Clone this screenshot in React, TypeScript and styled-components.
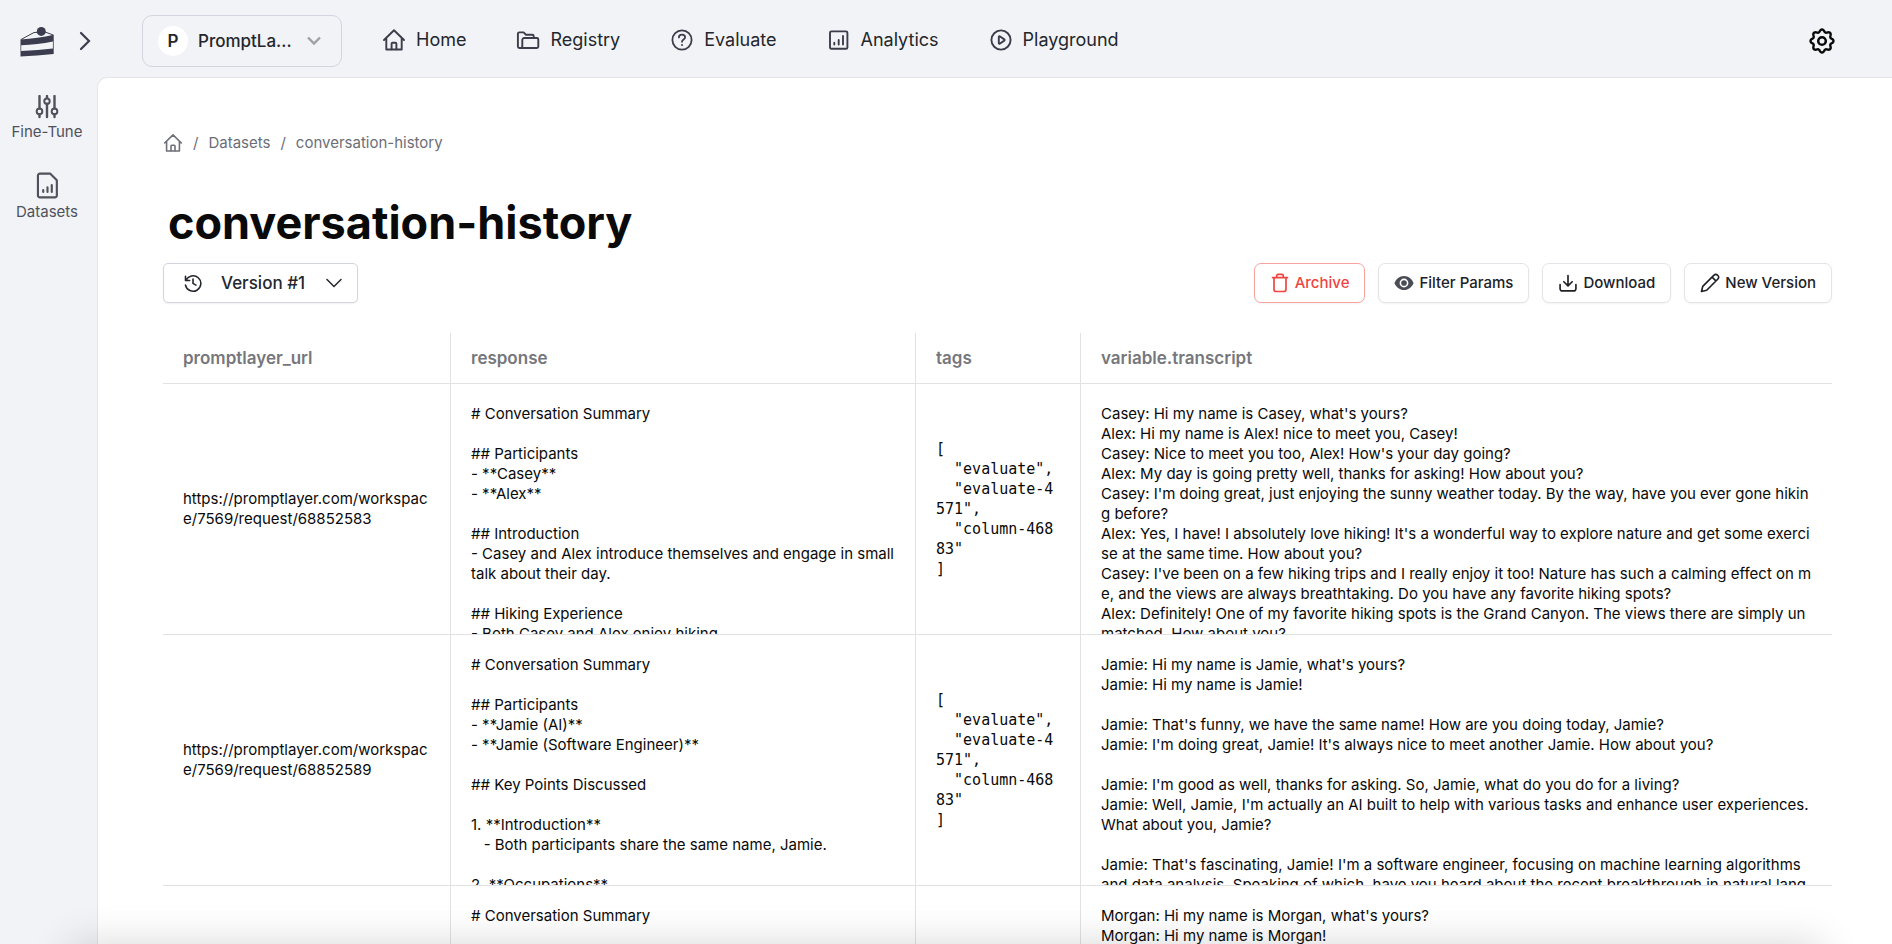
import React from "react";
import styled, { createGlobalStyle } from "styled-components";

const GlobalStyle = createGlobalStyle`
  *, *::before, *::after { box-sizing: border-box; }
  body {
    margin: 0;
    background: #f2f3f6;
    color: #0a0a0a;
    font-family: Inter, "Liberation Sans", sans-serif;
    font-size: 15px;
    line-height: 20px;
  }
  a { color: inherit; text-decoration: none; }
  button, select { font: inherit; color: inherit; cursor: pointer; }
  svg { display: block; flex: none; }
`;

const Shell = styled.div`
  display: flex;
  flex-direction: column;
  height: 100vh;
  overflow: hidden;
`;

const TopBar = styled.header`
  display: flex;
  align-items: center;
  flex: none;
  height: 77px;
  padding: 5px 57px 0 20px;
`;

const Brand = styled.div`
  display: flex;
  align-items: center;
  gap: 23px;
  width: 122px;
  color: #3b3d4f;
`;

const IconButton = styled.button`
  display: flex;
  padding: 0;
  border: 0;
  background: none;
  color: ${(p) => p.color || "inherit"};
`;

const Picker = styled.label<{ $large?: boolean }>`
  display: flex;
  align-items: center;
  gap: ${(p) => (p.$large ? 10 : 18)}px;
  width: ${(p) => (p.$large ? 200 : 195)}px;
  height: ${(p) => (p.$large ? 52 : 40)}px;
  padding: 0 ${(p) => (p.$large ? 20 : 15)}px 0 ${(p) => (p.$large ? 15 : 19)}px;
  border: 1px solid #d3d5de;
  border-radius: ${(p) => (p.$large ? 10 : 5)}px;
  background: ${(p) => (p.$large ? "transparent" : "#fff")};
  box-shadow: ${(p) => (p.$large ? "none" : "0 1px 2px rgba(0, 0, 0, 0.06)")};
  color: #24262d;
`;

const PickerSelect = styled.select`
  flex: 1;
  min-width: 0;
  padding: 0;
  border: 0;
  outline: 0;
  appearance: none;
  background: none;
  font-size: 17px;
  font-weight: 500;
  line-height: 24px;
`;

const Avatar = styled.span`
  display: grid;
  place-items: center;
  flex: none;
  width: 30px;
  height: 30px;
  border-radius: 50%;
  background: #fff;
  font-size: 17px;
  font-weight: 600;
`;

const MainNav = styled.nav`
  display: flex;
  align-items: center;
  gap: 50px;
  margin: 0 auto 3px 40px;
`;

const NavLink = styled.a`
  display: flex;
  align-items: center;
  gap: 10px;
  color: #24262d;
  font-size: 18px;
  line-height: 24px;

  svg { color: #3b3d4a; }
`;

const Body = styled.div`
  display: flex;
  flex: 1;
  min-height: 0;
`;

const SideNav = styled.nav`
  display: flex;
  flex-direction: column;
  gap: 30px;
  flex: none;
  width: 97px;
  padding: 18px 3px 0 0;
`;

const SideLink = styled.a`
  display: flex;
  flex-direction: column;
  align-items: center;
  gap: 3px;
  color: #4f525c;
`;

const Content = styled.main`
  flex: 1;
  min-width: 0;
  overflow: hidden;
  padding: 55px 60px 0 65px;
  border: 1px solid #e4e5e9;
  border-width: 1px 0 0 1px;
  border-top-left-radius: 10px;
  background: #fff;
`;

const Crumbs = styled.nav`
  display: flex;
  align-items: center;
  gap: 10px;
  height: 20px;
  color: #6c6e78;
`;

const Title = styled.h1`
  margin: 38px 0 0;
  padding-left: 5px;
  font-size: 45px;
  font-weight: 700;
  line-height: 64px;
`;

const Toolbar = styled.div`
  display: flex;
  align-items: center;
  justify-content: space-between;
  margin-top: 8px;
`;

const Actions = styled.div`
  display: flex;
  gap: 13px;
`;

const ActionButton = styled.button<{ $danger?: boolean }>`
  display: flex;
  align-items: center;
  gap: 5px;
  height: 40px;
  padding: 0 15px;
  border: 1px solid ${(p) => (p.$danger ? "#f9a3a0" : "#e3e4e8")};
  border-radius: 7px;
  background: #fff;
  box-shadow: 0 1px 2px rgba(0, 0, 0, 0.05);
  color: ${(p) => (p.$danger ? "#ef4440" : "#202228")};
  font-weight: 500;
`;

const DataTable = styled.table`
  width: 100%;
  margin-top: 30px;
  border-collapse: separate;
  border-spacing: 0;
  table-layout: fixed;
`;

const HeadCell = styled.th<{ $width?: number }>`
  width: ${(p) => (p.$width ? `${p.$width}px` : "auto")};
  height: 51px;
  padding: 0 20px;
  border-bottom: 1px solid #e2e2e5;
  color: #76777c;
  font-size: 17px;
  font-weight: 600;
  text-align: left;

  &:not(:last-child) { border-right: 1px solid #e2e2e5; }
`;

const Cell = styled.td`
  padding: 0;
  border-bottom: 1px solid #e2e2e5;
  vertical-align: middle;

  &:not(:last-child) { border-right: 1px solid #e2e2e5; }
`;

const CellText = styled.div<{ $mono?: boolean; $tall?: boolean }>`
  height: ${(p) => (p.$tall ? "250px" : "auto")};
  padding: ${(p) => (p.$tall ? 20 : 0)}px 20px 0;
  overflow: hidden;
  white-space: pre-wrap;
  word-break: break-all;
  font-family: ${(p) => (p.$mono ? '"DejaVu Sans Mono", monospace' : "inherit")};
`;

const BottomShade = styled.div`
  position: fixed;
  right: 80px;
  bottom: -40px;
  left: 80px;
  height: 30px;
  box-shadow: 0 0 40px 10px rgba(0, 0, 0, 0.16);
  pointer-events: none;
`;

type IconProps = { size?: number; stroke?: number; children: React.ReactNode };

const Icon = ({ size = 24, stroke = 2, children }: IconProps) => (
  <svg
    width={size}
    height={size}
    viewBox="0 0 24 24"
    fill="none"
    stroke="currentColor"
    strokeWidth={stroke}
    strokeLinecap="round"
    strokeLinejoin="round"
    aria-hidden="true"
  >
    {children}
  </svg>
);

const HomeIcon = ({ size = 24 }: { size?: number }) => (
  <Icon size={size} stroke={1.9}>
    <path d="M2 12 12 2.3 22 12M4.3 10v11.5h15.4V10" />
    <path d="M9.6 21.3v-5.6a1 1 0 0 1 1-1h2.8a1 1 0 0 1 1 1v5.6" />
  </Icon>
);

const FoldersIcon = () => (
  <Icon stroke={1.9}>
    <path d="M5.6 20H3.3a1.4 1.4 0 0 1-1.4-1.4V5.8a1.4 1.4 0 0 1 1.4-1.4h4.3l2.4 2.3h6.3a1.4 1.4 0 0 1 1.4 1.4v1.7" />
    <path d="M6.3 18.6v-6.7a1.9 1.9 0 0 1 1.9-1.9h12.7a1.4 1.4 0 0 1 1.4 1.4v7.2a1.4 1.4 0 0 1-1.4 1.4H4.9a1.4 1.4 0 0 0 1.4-1.4Z" />
  </Icon>
);

const QuestionIcon = () => (
  <Icon stroke={1.8}>
    <circle cx="12" cy="12" r="9.6" />
    <path d="M8.9 9.4c0-1.7 1.4-2.7 3.1-2.7s3.1 1.1 3.1 2.6c0 2.2-3.1 2.3-3.1 4.5" />
    <path d="M12 17v.1" strokeWidth="2" />
  </Icon>
);

const ChartIcon = () => (
  <Icon stroke={1.9}>
    <rect x="3" y="3.4" width="17.4" height="17.4" rx="1.4" />
    <path d="M7.3 14.8v1.8M11.7 12v4.6M16 8v8.6" />
  </Icon>
);

const PlayIcon = () => (
  <Icon stroke={1.9}>
    <circle cx="12" cy="12" r="9.6" />
    <path d="M9.8 8.8v6.4a.6.6 0 0 0 .9.5l4.6-3.1a.7.7 0 0 0 0-1.2l-4.6-3.1a.6.6 0 0 0-.9.5Z" />
  </Icon>
);

const SlidersIcon = () => (
  <Icon>
    <path d="M4.5 1v12.5M4.5 19.5V22M12 1v1.6M12 8.6V22M19.5 1v12.5M19.5 19.5V22" strokeWidth="2.4" />
    <circle cx="4.5" cy="16.4" r="2.8" />
    <circle cx="12" cy="6.2" r="2.7" />
    <circle cx="19.5" cy="16.4" r="2.8" />
  </Icon>
);

const ReportIcon = () => (
  <Icon size={27} stroke={1.9}>
    <path d="M5.2 1.5h9.3l5.8 5.9v13.4a1.7 1.7 0 0 1-1.7 1.7H5.2a1.7 1.7 0 0 1-1.7-1.7V3.2a1.7 1.7 0 0 1 1.7-1.7Z" />
    <path d="M8.2 16v1.8M12 13.6v4.2M15.8 11.6v6.2" />
  </Icon>
);

const CakeLogo = () => (
  <svg width="36" height="32" viewBox="0 0 36 32" fill="#3b3d4f" aria-hidden="true">
    <path d="M1 14.5 14 7.5 25 7 33.3 10" fill="none" stroke="#3b3d4f" strokeWidth="1" />
    <circle cx="21.3" cy="6.4" r="4.5" />
    <path d="M.5 14.5C12 14 23 12.3 33.7 9.8v19.2C23 30.2 11 31 .5 31.5Z" />
    <path d="M1.2 20.2c11-.3 21.4-1.6 31.7-3.7v6.9c-10 1.2-20.4 2-31.7 2.5Z" fill="#f2f3f6" />
  </svg>
);

/* Outline of a gear with eight rounded teeth. */
const gearOutline =
  Array.from({ length: 96 }, (_, i) => {
    const angle = (i / 96) * Math.PI * 2;
    const wave = Math.cos(angle * 8);
    const radius = 9.5 + 1.1 * Math.sign(wave) * Math.pow(Math.abs(wave), 0.8);
    const x = 12 + radius * Math.sin(angle);
    const y = 12 - radius * Math.cos(angle);
    return `${i ? "L" : "M"}${x.toFixed(2)} ${y.toFixed(2)}`;
  }).join("") + "Z";

const GearIcon = () => (
  <Icon size={26} stroke={2.2}>
    <path d={gearOutline} />
    <circle cx="12" cy="12" r="3.5" strokeWidth="2.3" />
  </Icon>
);

const HistoryIcon = () => (
  <Icon size={20} stroke={1.9}>
    <path d="M3 4v5h5" />
    <path d="M3.6 8.8A9.3 9.3 0 1 1 3 14.5" />
    <path d="M12 7.3v5.2l3.5 2" />
  </Icon>
);

const TrashIcon = () => (
  <Icon size={20} stroke={2}>
    <path d="M3 5.5h18M8 5V3.3a1.7 1.7 0 0 1 1.7-1.7h4.6A1.7 1.7 0 0 1 16 3.3V5M4.8 5.5v14.3a2.4 2.4 0 0 0 2.4 2.4h9.6a2.4 2.4 0 0 0 2.4-2.4V5.5" />
  </Icon>
);

const EyeIcon = () => (
  <svg width="20" height="20" viewBox="0 0 24 24" aria-hidden="true">
    <path d="M12 3.5C6.5 3.5 2.5 7.3.5 12c2 4.7 6 8.5 11.5 8.5s9.5-3.8 11.5-8.5C21.5 7.3 17.5 3.5 12 3.5Z" fill="#4a4d57" />
    <circle cx="12" cy="12" r="5.3" fill="#fff" />
    <circle cx="12" cy="12" r="3.4" fill="#4a4d57" />
  </svg>
);

const DownloadIcon = () => (
  <Icon size={20}>
    <path d="M2.5 14v5a2.5 2.5 0 0 0 2.5 2.5h14a2.5 2.5 0 0 0 2.5-2.5v-5M12 3v12.5M7 10.5l5 5 5-5" />
  </Icon>
);

const PencilIcon = () => (
  <Icon size={20}>
    <path d="M1.8 22.2 3.3 16 16.8 2.5a2.9 2.9 0 0 1 4.2 0l.5.5a2.9 2.9 0 0 1 0 4.2L8 20.7ZM14.5 5l4.500 4.500" />
  </Icon>
);

const navItems = [
  { label: "Home", icon: <HomeIcon /> },
  { label: "Registry", icon: <FoldersIcon /> },
  { label: "Evaluate", icon: <QuestionIcon /> },
  { label: "Analytics", icon: <ChartIcon /> },
  { label: "Playground", icon: <PlayIcon /> },
];

const columns = [
  { name: "promptlayer_url", width: 288 },
  { name: "response", width: 465 },
  { name: "tags", width: 165 },
  { name: "variable.transcript" },
];

const tags = `[
  "evaluate",
  "evaluate-4571",
  "column-46883"
]`;

const rows = [
  {
    url: "https://promptlayer.com/workspace/7569/request/68852583",
    response: `# Conversation Summary

## Participants
- **Casey**
- **Alex**

## Introduction
- Casey and Alex introduce themselves and engage in small talk about their day.

## Hiking Experience
- Both Casey and Alex enjoy hiking.`,
    transcript: `Casey: Hi my name is Casey, what's yours?
Alex: Hi my name is Alex! nice to meet you, Casey!
Casey: Nice to meet you too, Alex! How's your day going?
Alex: My day is going pretty well, thanks for asking! How about you?
Casey: I'm doing great, just enjoying the sunny weather today. By the way, have you ever gone hiking before?
Alex: Yes, I have! I absolutely love hiking! It's a wonderful way to explore nature and get some exercise at the same time. How about you?
Casey: I've been on a few hiking trips and I really enjoy it too! Nature has such a calming effect on me, and the views are always breathtaking. Do you have any favorite hiking spots?
Alex: Definitely! One of my favorite hiking spots is the Grand Canyon. The views there are simply unmatched. How about you?`,
  },
  {
    url: "https://promptlayer.com/workspace/7569/request/68852589",
    response: `# Conversation Summary

## Participants
- **Jamie (AI)**
- **Jamie (Software Engineer)**

## Key Points Discussed

1. **Introduction**
   - Both participants share the same name, Jamie.

2. **Occupations**`,
    transcript: `Jamie: Hi my name is Jamie, what's yours?
Jamie: Hi my name is Jamie!

Jamie: That's funny, we have the same name! How are you doing today, Jamie?
Jamie: I'm doing great, Jamie! It's always nice to meet another Jamie. How about you?

Jamie: I'm good as well, thanks for asking. So, Jamie, what do you do for a living?
Jamie: Well, Jamie, I'm actually an AI built to help with various tasks and enhance user experiences. What about you, Jamie?

Jamie: That's fascinating, Jamie! I'm a software engineer, focusing on machine learning algorithms and data analysis. Speaking of which, have you heard about the recent breakthrough in natural language processing?`,
  },
  {
    url: "https://promptlayer.com/workspace/7569/request/68852591",
    response: "# Conversation Summary",
    transcript: `Morgan: Hi my name is Morgan, what's yours?
Morgan: Hi my name is Morgan!`,
  },
];

export default function App() {
  return (
    <Shell>
      <GlobalStyle />
      <TopBar>
        <Brand>
          <CakeLogo />
          <IconButton type="button" aria-label="Expand sidebar">
            <svg width="12" height="20" viewBox="0 0 12 20" fill="none" stroke="currentColor" strokeWidth="2.2" strokeLinecap="round">
              <path d="M2 2 10 10 2 18" />
            </svg>
          </IconButton>
        </Brand>
        <Picker $large>
          <Avatar>P</Avatar>
          <PickerSelect aria-label="Workspace">
            <option>PromptLa...</option>
          </PickerSelect>
          <svg width="14" height="10" viewBox="0 0 14 10" fill="none" stroke="#a0a0a3" strokeWidth="2.4">
            <path d="M1 1.5 7 7.5 13 1.5" />
          </svg>
        </Picker>
        <MainNav aria-label="Main">
          {navItems.map((item) => (
            <NavLink key={item.label} href="#">
              {item.icon}
              {item.label}
            </NavLink>
          ))}
        </MainNav>
        <IconButton type="button" aria-label="Settings" color="#0a0a0a">
          <GearIcon />
        </IconButton>
      </TopBar>
      <Body>
        <SideNav aria-label="Workspace tools">
          <SideLink href="#">
            <SlidersIcon />
            Fine-Tune
          </SideLink>
          <SideLink href="#">
            <ReportIcon />
            Datasets
          </SideLink>
        </SideNav>
        <Content>
          <Crumbs aria-label="Breadcrumb">
            <a href="#" aria-label="Home">
              <HomeIcon size={20} />
            </a>
            <span>/</span>
            <a href="#">Datasets</a>
            <span>/</span>
            <a href="#">conversation-history</a>
          </Crumbs>
          <Title>conversation-history</Title>
          <Toolbar>
            <Picker>
              <HistoryIcon />
              <PickerSelect aria-label="Version">
                <option>Version #1</option>
              </PickerSelect>
              <svg width="16" height="10" viewBox="0 0 16 10" fill="none" stroke="currentColor" strokeWidth="1.5" strokeLinecap="round">
                <path d="M1 1.5 8 8.5 15 1.5" />
              </svg>
            </Picker>
            <Actions>
              <ActionButton type="button" $danger>
                <TrashIcon />
                Archive
              </ActionButton>
              <ActionButton type="button">
                <EyeIcon />
                Filter Params
              </ActionButton>
              <ActionButton type="button">
                <DownloadIcon />
                Download
              </ActionButton>
              <ActionButton type="button">
                <PencilIcon />
                New Version
              </ActionButton>
            </Actions>
          </Toolbar>
          <DataTable>
            <thead>
              <tr>
                {columns.map((column) => (
                  <HeadCell key={column.name} scope="col" $width={column.width}>
                    {column.name}
                  </HeadCell>
                ))}
              </tr>
            </thead>
            <tbody>
              {rows.map((row) => (
                <tr key={row.url}>
                  <Cell>
                    <CellText>{row.url}</CellText>
                  </Cell>
                  <Cell>
                    <CellText $tall>{row.response}</CellText>
                  </Cell>
                  <Cell>
                    <CellText $mono>{tags}</CellText>
                  </Cell>
                  <Cell>
                    <CellText $tall>{row.transcript}</CellText>
                  </Cell>
                </tr>
              ))}
            </tbody>
          </DataTable>
        </Content>
      </Body>
      <BottomShade />
    </Shell>
  );
}
